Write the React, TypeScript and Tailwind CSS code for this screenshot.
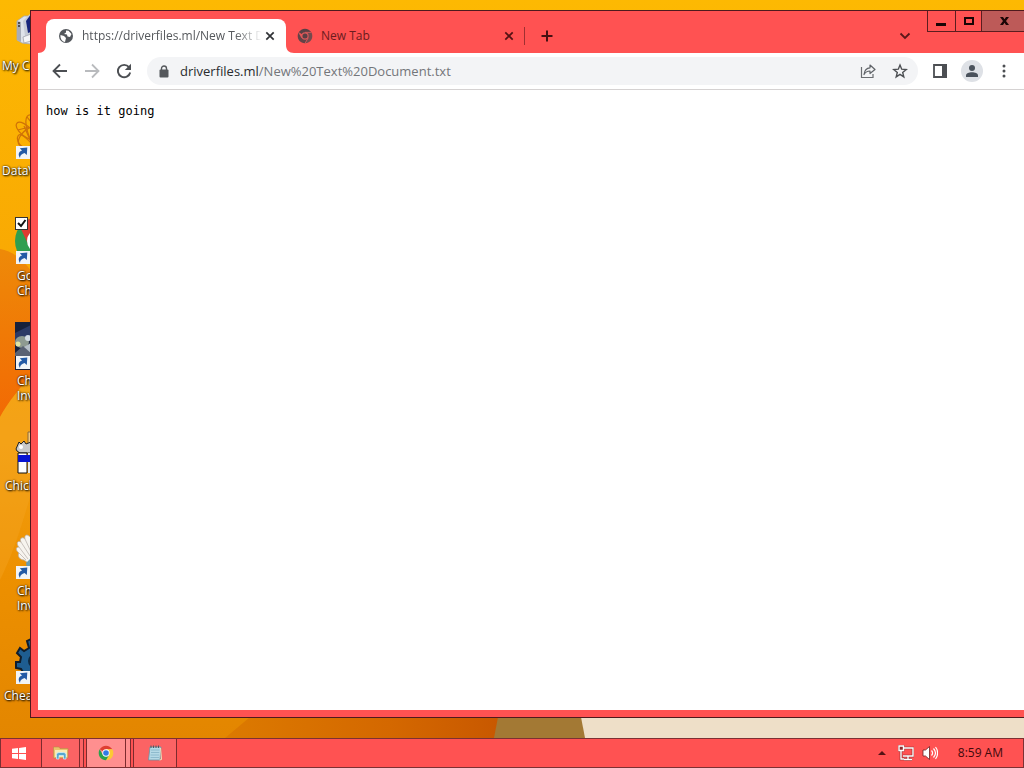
// Windows desktop with a Chrome window open over it
// wallpaper + desktop shortcuts, browser window, taskbar

import type { ReactNode } from "react";

const UI_FONT = "font-['Open_Sans','Noto_Sans',sans-serif]";

export default function App() {
  return (
    <div className={`flex h-screen flex-col overflow-hidden ${UI_FONT}`}>
      <main className="relative min-h-0 flex-1 overflow-hidden bg-[#f09a00]">
        <Wallpaper />
        <DesktopIcons />
        <BrowserWindow />
      </main>
      <Taskbar />
    </div>
  );
}

// =====================================================================
// Wallpaper
// =====================================================================
function Wallpaper() {
  return (
    <svg
      className="absolute inset-0 h-full w-full"
      viewBox="0 0 1024 738"
      preserveAspectRatio="none"
      aria-hidden
    >
      <defs>
        <linearGradient id="sky" x1="0" y1="0" x2="0" y2="1">
          <stop offset="0" stopColor="#fdb902" />
          <stop offset="0.35" stopColor="#f9a903" />
          <stop offset="0.6" stopColor="#f3a010" />
          <stop offset="0.78" stopColor="#ed9000" />
          <stop offset="1" stopColor="#e38600" />
        </linearGradient>
        <linearGradient id="swoop" x1="0" y1="0" x2="0" y2="1">
          <stop offset="0" stopColor="#ee8a08" />
          <stop offset="1" stopColor="#f26a04" />
        </linearGradient>
        <linearGradient id="ground" x1="0" y1="0" x2="1" y2="0">
          <stop offset="0" stopColor="#dc7a00" />
          <stop offset="0.6" stopColor="#d46800" />
          <stop offset="1" stopColor="#c85800" />
        </linearGradient>
      </defs>
      <rect width="1024" height="738" fill="url(#sky)" />
      <path d="M0 249C12 251 22 258 32 272V374C20 388 8 402 0 417Z" fill="url(#swoop)" />
      <path d="M0 417C8 402 20 388 32 374V490C22 526 12 556 0 580Z" fill="#f6a623" opacity=".4" />
      <path d="M225 738L250 717H500V738Z" fill="url(#ground)" />
      <path d="M494 738L498 717H590V738Z" fill="#a37934" />
      <path d="M585 738L581 717H1024V738Z" fill="#eedfc8" />
    </svg>
  );
}

// =====================================================================
// Desktop shortcuts
// =====================================================================
type Shortcut = {
  id: string;
  lines: string[];
  inset: string;
  arrow: boolean;
  art: ReactNode;
};

const SHORTCUTS: Shortcut[] = [
  {
    id: "computer",
    lines: ["My C"],
    inset: "pl-0.5",
    arrow: false,
    art: (
      <>
        <path d="M2 14L9 9H16V37L7 36L2 33Z" fill="#dfe3ea" stroke="#a5a8b0" strokeWidth=".8" />
        <path d="M2 14L6 15V35L2 33Z" fill="#a8adb8" />
        <path d="M3 16H5M3 19H5" stroke="#333" strokeWidth="1.5" />
        <path d="M8 14L16 6V27L10 29Z" fill="#c7ccd6" />
        <path d="M11 14L16 7V25L13 26Z" fill="#16247c" />
        <path d="M8 30L16 27V34L9 36Z" fill="#f4f5f7" stroke="#969aa4" strokeWidth=".7" />
      </>
    ),
  },
  {
    id: "data",
    lines: ["DataV"],
    inset: "pl-0.5",
    arrow: true,
    art: (
      <g fill="none" stroke="#cf7208" strokeWidth="1.2">
        <path d="M16 3C9 2 10 13 14 24S17 34 11 35S1 28 3 24S11 26 16 31" />
        <path d="M2 11C-1 15 5 23 16 28M2 11C5 8 12 13 16 17M6 34C0 31 5 20 16 15" />
        <path d="M12 5L16 10M9 14L16 30M3 18L14 15" />
      </g>
    ),
  },
  {
    id: "chrome",
    lines: ["Go", "Ch"],
    inset: "pl-[17px]",
    arrow: true,
    art: (
      <>
        <circle cx="24" cy="24" r="24" fill="#2f9e4f" />
        <path d="M5 10C9 4 16 0 24 0V24L14 29Z" fill="#df3b30" />
        <circle cx="24" cy="24" r="12" fill="#fff" />
        <rect x="0.5" y="0.5" width="12" height="12" fill="#fff" stroke="#333" />
        <path d="M3 6L6 9L10.500 3" fill="none" stroke="#111" strokeWidth="2" />
      </>
    ),
  },
  {
    id: "invaders-game",
    lines: ["Ch", "Inv"],
    inset: "pl-[17px]",
    arrow: true,
    art: (
      <>
        <rect width="48" height="48" fill="#18213b" />
        <path d="M0 11L16 3V13L8 18L0 22Z" fill="#2c3a66" />
        <ellipse cx="7" cy="20" rx="7" ry="6" fill="#8e9a91" />
        <circle cx="3" cy="22" r="2.500" fill="#e0e5a5" />
        <circle cx="13" cy="16" r="3" fill="#d4dde6" />
        <path d="M0 31L8 24L16 30V34H0Z" fill="#596173" />
        <path d="M9 25L16 21V31Z" fill="#b6bfc8" />
      </>
    ),
  },
  {
    id: "chick",
    lines: ["Chick"],
    inset: "pl-[5px]",
    arrow: false,
    art: (
      <>
        <path d="M13 19V5H16V19Z" fill="#f5c87a" stroke="#8b6a3c" />
        <path d="M1 22L4 15L6 17L9 14L11 17L16 15V26H5L2 24Z" fill="#c9c9c9" stroke="#222" />
        <circle cx="6" cy="20" r="2" fill="#fff" />
        <path d="M3 26H12V46H3Z" fill="#fff" stroke="#111" />
        <path d="M13 26H16V46H13Z" fill="#e7e7e7" />
        <path d="M3 28H16V35H3Z" fill="#0713d1" />
      </>
    ),
  },
  {
    id: "invaders",
    lines: ["Ch", "Inv"],
    inset: "pl-[17px]",
    arrow: true,
    art: (
      <>
        <path
          d="M16 6C12 1 9 3 10 7C7 4 4 7 6 10C2 8 1 12 4 15C0 15 1 19 4 21C2 24 5 28 9 28L16 33Z"
          fill="#f7f4ef"
          stroke="#b9aea5"
          strokeWidth=".8"
        />
        <path d="M10 7L16 20M6 10L15 24M4 15L13 27M4 21L11 28" stroke="#c9c2bd" />
        <path d="M11 31L16 26V36H12Z" fill="#669ab3" />
      </>
    ),
  },
  {
    id: "cheat",
    lines: ["Chea"],
    inset: "pl-1",
    arrow: true,
    art: (
      <>
        <path
          d="M16 2L12 4L14 11L9 14L5 11L2 16L6 20L5 25H1V31L6 32L9 37H16Z"
          fill="#1e5d91"
          stroke="#111d2b"
          strokeWidth="2"
        />
        <circle cx="20" cy="24" r="7" fill="#0f2941" />
      </>
    ),
  },
];

function DesktopIcons() {
  return (
    <ul className="relative w-[30px] overflow-hidden pt-[7px]">
      {SHORTCUTS.map((s) => (
        <li key={s.id} className="h-[105px]">
          <svg className="ml-[15px] h-12 w-[15px]" viewBox="0 0 15 48" aria-hidden>
            {s.art}
            {s.arrow && (
              <>
                <rect x="1" y="34" width="14" height="13" fill="#f1f4f7" />
                <path
                  d="M5 46C2.500 42 4 39.500 7 38.500L4.800 36.300L12.300 35.600L11.800 43L9.600 41C7 41.800 5 43 5 46Z"
                  fill="#235aa5"
                />
              </>
            )}
          </svg>
          <div
            className={`mt-[3px] text-xs leading-[15px] whitespace-nowrap text-white [text-shadow:1px_1px_2px_#000,0_0_2px_#000] ${s.inset}`}
          >
            {s.lines.map((line) => (
              <div key={line}>{line}</div>
            ))}
          </div>
        </li>
      ))}
    </ul>
  );
}

// =====================================================================
// Browser window
// =====================================================================
function BrowserWindow() {
  return (
    <section className="absolute top-[10px] right-0 bottom-5 left-[30px] flex flex-col border border-r-0 border-[#4e1a1d] bg-[#ff5252] pb-[7px] pl-[7px]">
      <TabStrip />
      <Toolbar />
      <div className="min-h-0 flex-1 bg-white px-2 py-3">
        <pre className="font-['DejaVu_Sans_Mono',monospace] text-xs leading-[18px] text-black">
          how is it going
        </pre>
      </div>
    </section>
  );
}

function TabStrip() {
  return (
    <header className="flex h-[42px] items-start pl-2">
      {/* active tab */}
      <div className="relative mt-2 flex h-[34px] w-60 items-center rounded-t-lg bg-white pr-2 pl-3">
        <svg className="absolute bottom-0 -left-2 h-2 w-2" viewBox="0 0 8 8" aria-hidden>
          <path d="M8 0V8H0C5 8 8 5 8 0Z" fill="#fff" />
        </svg>
        <svg className="absolute -right-2 bottom-0 h-2 w-2" viewBox="0 0 8 8" aria-hidden>
          <path d="M0 0V8H8C3 8 0 5 0 0Z" fill="#fff" />
        </svg>
        <GlobeIcon />
        <span className="ml-2 min-w-0 flex-1 overflow-hidden text-xs whitespace-nowrap text-[#55585c] [mask-image:linear-gradient(to_right,#000_85%,transparent)]">
          https://driverfiles.ml/New Text D
        </span>
        <CloseButton label="Close tab" color="text-[#303236]" />
      </div>

      {/* background tab */}
      <div className="mt-2 flex h-[34px] w-[238px] items-center pr-[7px] pl-[11px]">
        <ChromeIcon size={16} muted />
        <span className="ml-2 flex-1 text-xs text-[#6b1c1e]">New Tab</span>
        <CloseButton label="Close New Tab" color="text-[#541113]" />
      </div>
      <div className="mt-4 h-[18px] w-px bg-[#9f3031]" />
      <button type="button" aria-label="New tab" className="mt-[11px] ml-2 flex h-7 w-7 items-center justify-center">
        <svg width="14" height="14" viewBox="0 0 14 14" aria-hidden>
          <path d="M7 1.500V12.500M1.500 7H12.500" stroke="#461012" strokeWidth="2" />
        </svg>
      </button>

      <button
        type="button"
        aria-label="Search tabs"
        className="mt-[11px] mr-2 ml-auto flex h-7 w-7 items-center justify-center"
      >
        <svg width="12" height="12" viewBox="0 0 12 12" fill="none" aria-hidden>
          <path d="M1.500 3.500L6 8L10.500 3.500" stroke="#5c1719" strokeWidth="1.8" />
        </svg>
      </button>
      <WindowButtons />
    </header>
  );
}

function CloseButton({ label, color }: { label: string; color: string }) {
  return (
    <button type="button" aria-label={label} className={`flex h-4 w-4 items-center justify-center ${color}`}>
      <svg width="10" height="10" viewBox="0 0 10 10" aria-hidden>
        <path d="M1.300 1.300L8.700 8.700M8.700 1.300L1.300 8.700" stroke="currentColor" strokeWidth="1.7" />
      </svg>
    </button>
  );
}

function WindowButtons() {
  return (
    <div className="flex h-[21px] border-b border-l border-[#5b1d1f]">
      <button type="button" aria-label="Minimize" className="flex w-7 items-center justify-center border-r border-[#5b1d1f] pr-0.5">
        <svg width="10" height="12" viewBox="0 0 10 12" aria-hidden>
          <rect y="8" width="10" height="3" fill="#1a0505" />
        </svg>
      </button>
      <button type="button" aria-label="Maximize" className="flex w-[26px] items-center justify-center border-r border-[#5b1d1f]">
        <svg width="10" height="8" viewBox="0 0 10 8" aria-hidden>
          <path d="M1 1H9V7H1Z" fill="none" stroke="#1a0505" strokeWidth="2" />
        </svg>
      </button>
      <button type="button" aria-label="Close" className="flex w-[42px] items-center justify-center bg-[#bd5a58] pl-0.5">
        <svg width="9" height="8" viewBox="0 0 9 8" aria-hidden>
          <path
            d="M0 0H3L4.500 2.200L6 0H9L6 4L9 8H6L4.500 5.800L3 8H0L3 4Z"
            fill="#1a0505"
          />
        </svg>
      </button>
    </div>
  );
}

// =====================================================================
// Toolbar: navigation, address bar, profile and menu
// =====================================================================
function Toolbar() {
  return (
    <nav className="flex h-[37px] items-center border-b border-[#d5d2d2] bg-white pr-1 pl-1.5">
      <NavButton label="Back">
        <path d="M15 8H2M8 1.500L1.500 8L8 14.500" stroke="#4c4f53" strokeWidth="1.800" />
      </NavButton>
      <NavButton label="Forward">
        <path d="M1 8H14M8 1.500L14.500 8L8 14.500" stroke="#b9bbbe" strokeWidth="1.800" />
      </NavButton>
      <NavButton label="Reload">
        <path d="M13 4.200A6.200 6.200 0 1 0 14.200 9.500" stroke="#4c4f53" strokeWidth="1.900" />
        <path d="M15 0.800V7H8.800Z" fill="#4c4f53" />
      </NavButton>

      <div className="ml-[7px] flex h-7 min-w-0 flex-1 items-center rounded-full bg-[#f3f4f6] pr-0.5 pl-3">
        <svg width="10" height="13" viewBox="0 0 10 13" aria-hidden>
          <path d="M2.500 6V3.500A2.500 2.500 0 0 1 7.500 3.500V6" fill="none" stroke="#55585c" strokeWidth="1.400" />
          <rect x="0.500" y="4.500" width="9" height="8" rx="1" fill="#55585c" />
        </svg>
        <div
          role="textbox"
          aria-label="Address"
          className="ml-[11px] min-w-0 flex-1 overflow-hidden text-[13px] leading-5 whitespace-nowrap text-[#73767a]"
        >
          <span className="text-[#292b2e]">driverfiles.ml</span>/New%20Text%20Document.txt
        </div>
        <NavButton label="Share">
          <path d="M1.500 4V14.500H13V11" stroke="#6a6d71" strokeWidth="1.200" />
          <path
            d="M4 11.500C4.500 7 7 5 10 4.800V2L15 6.500L10 10.500V8C7.500 8 5.500 9 4 11.500Z"
            stroke="#5f6368"
            strokeWidth="1.200"
            strokeLinejoin="round"
          />
        </NavButton>
        <NavButton label="Bookmark this page">
          <path
            d="M8 2L9.700 6.200L14.200 6.500L10.700 9.400L11.800 13.900L8 11.400L4.200 13.900L5.300 9.400L1.800 6.500L6.300 6.200Z"
            stroke="#4c4f53"
            strokeWidth="1.400"
          />
        </NavButton>
      </div>

      <div className="ml-1.5 flex">
        <NavButton label="Side panel">
          <path d="M2 2H14V14H2Z" stroke="#4c4f53" strokeWidth="1.800" />
          <path d="M10 1H15V15H10Z" fill="#4c4f53" />
        </NavButton>
        <button type="button" aria-label="Profile" className="flex w-8 items-center justify-center">
          <svg width="22" height="22" viewBox="0 0 22 22" aria-hidden>
            <circle cx="11" cy="11" r="11" fill="#dee1e6" />
            <circle cx="11" cy="8" r="3" fill="#4a525c" />
            <path d="M5 17V15.500C5 13.500 8 12.300 11 12.300S17 13.500 17 15.500V17Z" fill="#4a525c" />
          </svg>
        </button>
        <NavButton label="Menu">
          <g fill="#4c4f53">
            <circle cx="8" cy="3" r="1.500" />
            <circle cx="8" cy="8" r="1.500" />
            <circle cx="8" cy="13" r="1.500" />
          </g>
        </NavButton>
      </div>
    </nav>
  );
}

function NavButton({ label, children }: { label: string; children: ReactNode }) {
  return (
    <button type="button" aria-label={label} className="flex h-7 w-8 shrink-0 items-center justify-center">
      <svg width="16" height="16" viewBox="0 0 16 16" fill="none" aria-hidden>
        {children}
      </svg>
    </button>
  );
}

// =====================================================================
// Taskbar
// =====================================================================
function Taskbar() {
  return (
    <footer className="flex h-[30px] shrink-0 items-stretch border border-[#7d3033] bg-[#ff5252]">
      <button type="button" aria-label="Start" className="flex w-10 items-center justify-center pr-1">
        <svg width="14" height="13" viewBox="0 0 14 13" fill="#fff" aria-hidden>
          <path d="M0 1.800L6 1V6H0ZM7 0.900L14 0V6H7ZM0 7H6V12L0 11.200ZM7 7H14V13L7 12.100Z" />
        </svg>
      </button>
      <button
        type="button"
        aria-label="File Explorer"
        className="flex w-[39px] items-center justify-center border-x border-[#7d2b2e] bg-[#fb6364]"
      >
        <ExplorerIcon />
      </button>
      <div className="w-1 border-r border-[#7d2b2e] bg-[#fb6364]" />
      <button
        type="button"
        aria-label="Google Chrome"
        className="ml-0.5 flex w-10 items-center justify-center border-x border-[#7d2b2e] bg-[#ff8f8f]"
      >
        <ChromeIcon size={16} />
      </button>
      <div className="w-[5px] border-r border-[#7d2b2e] bg-[#ff8f8f]" />
      <button
        type="button"
        aria-label="Notepad"
        className="ml-0.5 flex w-11 items-center justify-center border-x border-[#7d2b2e] bg-[#fb6364]"
      >
        <NotepadIcon />
      </button>

      <div className="ml-auto flex items-center pr-5">
        <button type="button" aria-label="Show hidden icons" className="flex h-6 w-6 items-center justify-center">
          <svg width="8" height="4" viewBox="0 0 8 4" aria-hidden>
            <path d="M4 0L8 4H0Z" fill="#541214" />
          </svg>
        </button>
        <button type="button" aria-label="Network" className="flex h-6 w-6 items-center justify-center">
          <svg width="16" height="16" viewBox="0 0 16 16" fill="none" aria-hidden>
            <path d="M6 3H15V11H5M10 11V14M6 14.500H14M3 6V14H6" stroke="#8c2a2c" strokeWidth="2.600" />
            <path d="M1 1H5.500V5.500H1Z" fill="#8c2a2c" stroke="#8c2a2c" strokeWidth="2" />
            <path d="M6 3H15V11H5M10 11V14M6 14.500H14M3 6V14H6" stroke="#fff" strokeWidth="1.400" />
            <path d="M1 1H5.500V5.500H1Z" stroke="#fff" strokeWidth="1.400" />
          </svg>
        </button>
        <button type="button" aria-label="Volume" className="flex h-6 w-6 items-center justify-center">
          <svg width="16" height="16" viewBox="0 0 16 16" fill="none" aria-hidden>
            <path d="M1 5H3.500L7.500 1.500V14.500L3.500 11H1Z" fill="#fff" stroke="#6d2022" strokeWidth=".8" />
            <path
              d="M9.500 5.500C10.800 7 10.800 9 9.500 10.500M11.500 3.500C14 6.300 14 9.700 11.500 12.500M13.500 2C16.300 5.500 16.300 10.500 13.500 14"
              stroke="#fff"
              strokeWidth="1.200"
            />
          </svg>
        </button>
        <time className="ml-4 text-xs text-[#41090b]">8:59 AM</time>
      </div>
    </footer>
  );
}

// =====================================================================
// Icons
// =====================================================================
function GlobeIcon() {
  return (
    <svg className="shrink-0" width="16" height="16" viewBox="0 0 16 16" aria-hidden>
      <circle cx="8" cy="8" r="7" fill="#54585d" />
      <path d="M2.500 7L6 8L8 10L7 14C4 13.500 2 10.500 2.500 7Z" fill="#fff" />
      <path d="M8 2.500L10.500 2.800L13.500 6L12 9L9.500 8.500L9 6.500L6 6L8 4.500Z" fill="#fff" />
    </svg>
  );
}

function ChromeIcon({ size, muted = false }: { size: number; muted?: boolean }) {
  const red = muted ? "#594044" : "#df3f32";
  const green = muted ? "#634347" : "#2ba24c";
  const yellow = muted ? "#744a4d" : "#fcc934";
  const ring = muted ? "#d9595b" : "#fff";
  const core = muted ? "#594044" : "#317be5";
  return (
    <svg className="shrink-0" width={size} height={size} viewBox="0 0 24 24" aria-hidden>
      <path d="M12 12L2.500 6.500A11 11 0 0 1 21.500 6.500H12Z" fill={red} />
      <path d="M12 6.500H21.500A11 11 0 0 1 12 23L16.800 14.800Z" fill={yellow} />
      <path d="M2.500 6.500A11 11 0 0 0 12 23L16.800 14.800L12 12L7.200 14.800Z" fill={green} />
      {muted && (
        <path d="M12 6.500H21.500M7.200 14.800L2.500 6.500M16.800 14.800L12 23" stroke={ring} strokeWidth="1.300" />
      )}
      <circle cx="12" cy="12" r="5.500" fill={ring} />
      <circle cx="12" cy="12" r={muted ? 3.8 : 4.2} fill={core} />
    </svg>
  );
}

function ExplorerIcon() {
  return (
    <svg width="16" height="14" viewBox="0 0 16 14" aria-hidden>
      <path d="M0.500 1H6L7 2.500H15V12H0.500Z" fill="#e9c46c" stroke="#b88b47" strokeWidth=".6" />
      <path d="M2 4H14V11H2Z" fill="#f9ebb4" />
      <path d="M3.500 13V8.500Q3.500 6.500 6 6.500H10.500Q13 6.500 13 8.500V13H10.500V9.500H6V13Z" fill="#56a8cf" stroke="#d5f1fa" strokeWidth="0.7" />
    </svg>
  );
}

function NotepadIcon() {
  return (
    <svg width="14" height="16" viewBox="0 0 14 16" aria-hidden>
      <path d="M2 2H13L12 15H0.500Z" fill="#b5d9e6" stroke="#6d93a2" strokeWidth=".8" />
      <path d="M3 5H11.500M3 7.500H11.300M2.500 10H11M2.500 12.500H11" stroke="#84b2c6" strokeWidth=".8" />
      <path d="M3 0.500V3M5.500 0.500V3M8 0.500V3M10.500 0.500V3" stroke="#4b5b62" />
      <path d="M12.500 3L13.500 14.500L11.500 15" fill="none" stroke="#eee5bd" />
    </svg>
  );
}
